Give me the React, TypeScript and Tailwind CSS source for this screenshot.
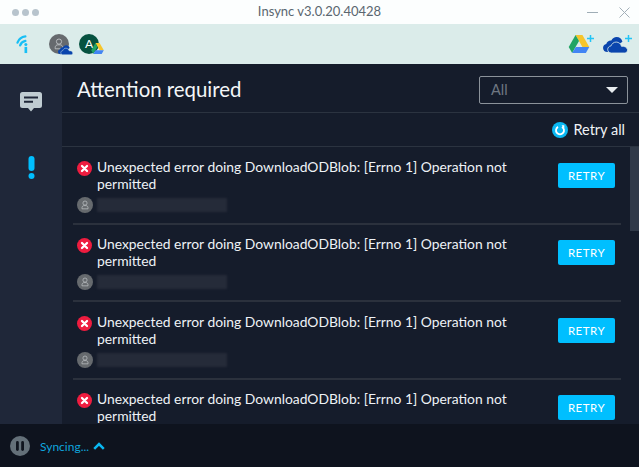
import { Fragment } from "react";

const items = [1, 2, 3, 4];

function AccountIcon({ className }: { className: string }) {
  return (
    <svg viewBox="0 0 20 20" className={className}>
      <circle cx="10" cy="10" r="10" fill="#666a6e" />
      <circle cx="10" cy="7.600" r="2.600" fill="none" stroke="#bfc3c6" strokeWidth="0.900" />
      <path d="M6.200 14.800v-1.300c0-1.500 1.200-2.700 2.600-2.700h2.400c1.400 0 2.600 1.200 2.600 2.700v1.300z" fill="none" stroke="#bfc3c6" strokeWidth="0.900" />
    </svg>
  );
}

function DriveIcon({ className }: { className: string }) {
  return (
    <svg viewBox="0 0 24 21" className={className}>
      <path d="M8 0h8l8 14h-8z" fill="#f6c52c" />
      <path d="M8 0l4 7-8 14-4-7z" fill="#20a464" />
      <path d="M8.200 14H24l-4 7H4z" fill="#4285f4" />
    </svg>
  );
}

function CloudIcon({ className }: { className: string }) {
  return (
    <svg viewBox="0 0 28 18" className={className}>
      <path d="M5 17c-3 0-5-2-5-4.600 0-2.200 1.500-4 3.600-4.400C4.400 5.300 6.800 3.700 9.300 4c1.200-2.400 3.400-4 6-4 3.200 0 5.800 2.200 6.500 5.300" fill="#0a45ad" />
      <path d="M9.500 18c-2.500 0-4.300-1.700-4.300-4 0-2.100 1.600-3.800 3.800-4 .8-2.600 3.100-4.300 5.800-4.300 2.900 0 5.300 2 5.900 4.800 3.200-.6 6.300 1.100 6.800 3.700.5 2.300-1.300 3.800-3.500 3.800z" fill="#0a45ad" stroke="#dbecea" strokeWidth="0.900" />
    </svg>
  );
}

function Plus({ className }: { className: string }) {
  return (
    <svg viewBox="0 0 7 7" className={className}>
      <path d="M3.500 0v7M0 3.500h7" stroke="#22c4f5" strokeWidth="1.500" />
    </svg>
  );
}

function ErrorRow() {
  return (
    <div className="flex items-start pl-[15px] pr-[8px]">
      <div className="flex-1 min-w-0">
        <div className="flex items-start gap-[5px]">
          <svg viewBox="0 0 16 16" className="w-[15px] h-[15px] mt-[3px] shrink-0">
            <circle cx="8" cy="8" r="8" fill="#ee1c3f" />
            <path d="M5.300 5.300l5.400 5.400M10.700 5.300l-5.400 5.400" stroke="#fff" strokeWidth="2.400" strokeLinecap="round" />
          </svg>
          <p className="text-[13.870px] leading-[17px] text-[#eef2f6] w-[440px]">
            Unexpected error doing DownloadODBlob: [Errno 1] Operation not permitted
          </p>
        </div>
        <div className="flex items-center gap-[4px] mt-[5px]">
          <AccountIcon className="w-[16px] h-[16px] shrink-0" />
          <div className="w-[130px] h-[14px] bg-[#252b39] blur-[1px]" />
        </div>
      </div>
      <button className="w-[57px] h-[25px] mt-[5px] mr-[7px] rounded-[2px] bg-[#00bfff] text-white text-[11.500px] tracking-[0.5px] shrink-0">
        RETRY
      </button>
    </div>
  );
}

export default function App() {
  return (
    <div className="w-[639px] h-[467px] flex flex-col overflow-hidden bg-[#151c2b] font-['Lato','Open_Sans',sans-serif]">
      {/* title bar */}
      <div className="h-[24px] shrink-0 bg-[#fcfefe] flex items-center justify-between pl-[12px] pr-[9px]">
        <div className="flex gap-[3px]">
          <span className="w-[7px] h-[7px] rounded-full bg-[#b8c4cd]" />
          <span className="w-[7px] h-[7px] rounded-full bg-[#b8c4cd]" />
          <span className="w-[7px] h-[7px] rounded-full bg-[#b8c4cd]" />
        </div>
        <span className="text-[13px] text-[#5a6670] ml-[13px]">Insync v3.0.20.40428</span>
        <div className="flex items-center gap-[21px]">
          <span className="w-[11px] h-[1px] bg-[#9fadb6]" />
          <svg viewBox="0 0 11 11" className="w-[11px] h-[11px]">
            <path d="M.5.500l10 10M10.500.500l-10 10" stroke="#a3b0b9" strokeWidth="1" />
          </svg>
        </div>
      </div>

      {/* toolbar */}
      <div className="h-[40px] shrink-0 bg-[#dbecea] flex items-center pl-[16px] pr-[7px]">
        <svg viewBox="0 0 14 20" className="w-[14px] h-[19px]">
          <path d="M1.200 8C2.500 4.500 5.500 2 9.500 1.500M4 11C4.800 8.500 6.800 6.800 9.500 6.300" fill="none" stroke="#18bff5" strokeWidth="2.400" strokeLinecap="round" />
          <circle cx="10" cy="10" r="1.600" fill="#18bff5" />
          <rect x="8.600" y="12.500" width="2.800" height="6.500" fill="#18bff5" />
        </svg>
        <div className="relative ml-[19px] w-[20px] h-[20px]">
          <AccountIcon className="w-[20px] h-[20px]" />
          <CloudIcon className="absolute left-[9px] top-[11px] w-[15px] h-[10px]" />
        </div>
        <div className="relative ml-[10px] w-[20px] h-[20px]">
          <div className="w-[20px] h-[20px] rounded-full bg-[#065240] text-white text-[12px] leading-[20px] text-center">A</div>
          <DriveIcon className="absolute left-[12px] top-[9px] w-[13px] h-[11px]" />
        </div>
        <div className="ml-auto flex items-center gap-[8px]">
          <div className="relative w-[26px] h-[20px]">
            <DriveIcon className="absolute left-0 bottom-[1px] w-[22px] h-[18px]" />
            <Plus className="absolute right-0 top-[1px] w-[7px] h-[7px]" />
          </div>
          <div className="relative w-[30px] h-[20px]">
            <CloudIcon className="absolute left-0 bottom-[1px] w-[27px] h-[16px]" />
            <Plus className="absolute right-0 top-[1px] w-[7px] h-[7px]" />
          </div>
        </div>
      </div>

      <div className="flex-1 min-h-0 flex">
        {/* sidebar */}
        <div className="w-[62px] shrink-0 bg-[#1f2739] flex flex-col items-center pt-[28px] gap-[44px]">
          <svg viewBox="0 0 22 20" className="w-[22px] h-[20px]">
            <path d="M2.500 0h17A2.500 2.500 0 0 1 22 2.500v11a2.500 2.500 0 0 1-2.500 2.500H14l-3 3.500L8 16H2.500A2.500 2.500 0 0 1 0 13.500v-11A2.500 2.500 0 0 1 2.500 0z" fill="#c0ccd2" />
            <path d="M4 5.500h14M4 9.800h9" stroke="#1f2739" strokeWidth="2" />
          </svg>
          <svg viewBox="0 0 7 23" className="w-[7px] h-[23px]">
            <rect x="0.500" y="0" width="6" height="15" rx="3" fill="#00bfff" />
            <circle cx="3.500" cy="20" r="3" fill="#00bfff" />
          </svg>
        </div>

        {/* main */}
        <div className="flex-1 min-w-0 flex flex-col">
          <div className="h-[49px] shrink-0 flex items-center justify-between pt-[3px] pl-[15px] pr-[11px] border-b border-[#2b3340]">
            <h1 className="text-[20.400px] text-[#f3f6f8] -mt-[1px]">Attention required</h1>
            <div className="w-[149px] h-[28px] rounded-[2px] border border-[#8b929a] flex items-center justify-between pl-[11px] pr-[9px]">
              <span className="text-[14.500px] text-[#6f7782]">All</span>
              <span className="w-0 h-0 border-x-[6px] border-x-transparent border-t-[6px] border-t-[#e8ecef]" />
            </div>
          </div>
          <div className="h-[34px] shrink-0 flex items-center justify-end pr-[14px] gap-[5px] border-b border-[#2b3340]">
            <svg viewBox="0 0 16 16" className="w-[16px] h-[16px]">
              <circle cx="8" cy="8" r="8" fill="#0ab8f2" />
              <path d="M6 4.900a4 4 0 1 0 4 0" fill="none" stroke="#fff" strokeWidth="1.800" />
              <path d="M9.500 3.200h2.800v2.800z" fill="#fff" />
            </svg>
            <span className="text-[14.500px] text-[#f0f3f6]">Retry all</span>
          </div>
          <div className="flex-1 min-h-0 flex overflow-hidden">
            <div className="flex-1 min-w-0 pt-[11px] flex flex-col">
              {items.map((n, i) => (
                <Fragment key={n}>
                  {i > 0 && <div className="h-[2px] shrink-0 bg-[#2b313d] ml-[11px] mr-[9px] mt-[10px] mb-[10.330px]" />}
                  <ErrorRow />
                </Fragment>
              ))}
            </div>
            <div className="w-[9px] shrink-0">
              <div className="h-[84px] bg-[#303948]" />
            </div>
          </div>
        </div>
      </div>

      {/* footer */}
      <div className="h-[43px] shrink-0 bg-[#0e131e] flex items-center pl-[10px] gap-[10px] relative">
        <svg viewBox="0 0 20 20" className="w-[20px] h-[20px]">
          <circle cx="10" cy="10" r="10" fill="#647079" />
          <rect x="6" y="5" width="2.800" height="10" rx="1.400" fill="#10151f" />
          <rect x="11.200" y="5" width="2.800" height="10" rx="1.400" fill="#10151f" />
        </svg>
        <span className="text-[12px] text-[#0ea5dd] pt-[2px]">Syncing...</span>
        <svg viewBox="0 0 12 8" className="w-[12px] h-[8px] -ml-[6px]">
          <path d="M1.200 6.800L6 2l4.800 4.800" fill="none" stroke="#0ab8f2" strokeWidth="2.500" />
        </svg>
      </div>
    </div>
  );
}
